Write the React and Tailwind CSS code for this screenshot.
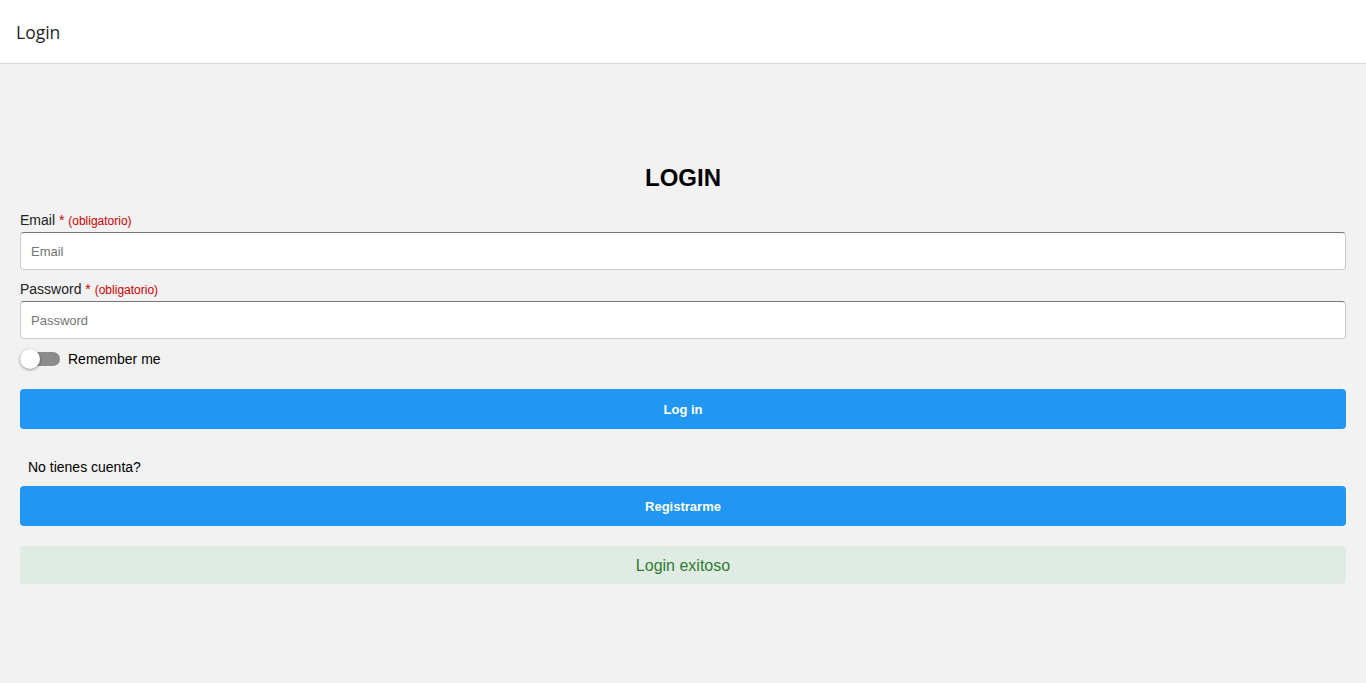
export default function App() {
  return (
    <div className="min-h-[683px] bg-[#f2f2f2]" style={{ fontFamily: '"Liberation Sans", Arial, sans-serif' }}>
      <header className="h-[64px] bg-white border-b border-[#d9d9d9] flex items-center px-4 pt-[1px]">
        <span className="text-[17.5px] text-[#1f1f1f]" style={{ fontFamily: '"Open Sans", sans-serif' }}>Login</span>
      </header>

      <div className="px-5 pt-[99px]">
        <h1 className="text-center text-[24px] font-bold text-black leading-[30px]">LOGIN</h1>

        <form className="mt-[19px]" onSubmit={(e) => e.preventDefault()}>
          <label className="block text-[14px] text-[#222] leading-[16px]">
            Email <span className="text-[#d10000]">*</span>{' '}
            <span className="text-[12px] text-[#d10000]">(obligatorio)</span>
          </label>
          <input
            placeholder="Email"
            className="mt-[3px] w-full h-[38px] bg-white rounded-[4px] border border-[#cccccc] border-t-[#767676] px-[10px] text-[13px] placeholder:text-[#757575] outline-none"
          />

          <label className="block mt-[11px] text-[14px] text-[#222] leading-[16px]">
            Password <span className="text-[#d10000]">*</span>{' '}
            <span className="text-[12px] text-[#d10000]">(obligatorio)</span>
          </label>
          <input
            type="password"
            placeholder="Password"
            className="mt-[3px] w-full h-[38px] bg-white rounded-[4px] border border-[#cccccc] border-t-[#767676] px-[10px] text-[13px] placeholder:text-[#757575] outline-none"
          />

          <div className="mt-[9px] flex items-center h-[22px]">
            <div className="relative w-[40px] h-[14px] rounded-full bg-[#8c8c8c]">
              <div className="absolute left-0 top-[-3px] w-[20px] h-[20px] rounded-full bg-white shadow-[0_1px_3px_rgba(0,0,0,0.4)]" />
            </div>
            <span className="ml-[8px] text-[14px] text-black">Remember me</span>
          </div>

          <button className="mt-[19px] w-full h-[40px] pt-[2px] rounded-[4px] bg-[#2196f3] text-white text-[13px] font-bold">
            Log in
          </button>
        </form>

        <p className="mt-[29px] pl-[8px] text-[14px] text-black leading-[18px]">No tienes cuenta?</p>
        <button className="mt-[10px] w-full h-[40px] pt-[2px] rounded-[4px] bg-[#2196f3] text-white text-[13px] font-bold">
          Registrarme
        </button>

        <div className="mt-[20px] h-[38px] pt-[2px] rounded-[4px] bg-[#e0ebe3] flex items-center justify-center text-[16px] text-[#2e7d32]">
          Login exitoso
        </div>
      </div>
    </div>
  )
}
